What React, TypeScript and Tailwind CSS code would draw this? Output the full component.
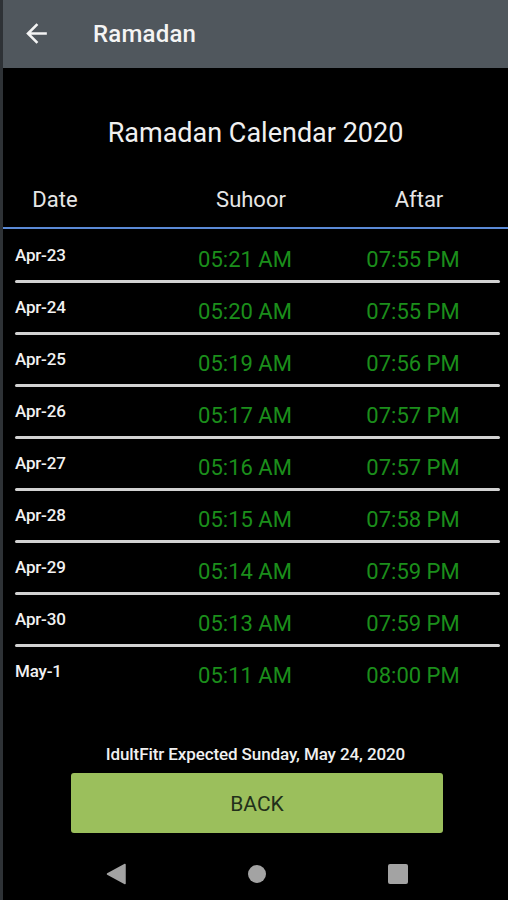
import React from "react";

const rows: [string, string, string][] = [
  ["Apr-23", "05:21 AM", "07:55 PM"],
  ["Apr-24", "05:20 AM", "07:55 PM"],
  ["Apr-25", "05:19 AM", "07:56 PM"],
  ["Apr-26", "05:17 AM", "07:57 PM"],
  ["Apr-27", "05:16 AM", "07:57 PM"],
  ["Apr-28", "05:15 AM", "07:58 PM"],
  ["Apr-29", "05:14 AM", "07:59 PM"],
  ["Apr-30", "05:13 AM", "07:59 PM"],
  ["May-1", "05:11 AM", "08:00 PM"],
];

export default function App() {
  return (
    <div
      className="flex w-[508px] h-[900px] bg-black overflow-hidden"
      style={{ fontFamily: "Roboto, 'Noto Sans', sans-serif" }}
    >
      <div className="w-[3px] h-full bg-[#2e3236] shrink-0" />
      <div className="flex flex-col flex-1">
        {/* App bar */}
        <div className="h-[68px] bg-[#50575d] flex items-center shrink-0">
          <svg
            width="31"
            height="31"
            viewBox="0 0 24 24"
            className="ml-[18px] mt-[-2px]"
            fill="#f4f4f4"
          >
            <path d="M20 11H7.83l5.59-5.59L12 4l-8 8 8 8 1.41-1.41L7.83 13H20v-2z" />
          </svg>
          <span className="ml-[41px] text-[24px] leading-[28px] font-medium text-[#f4f4f4] tracking-[0.2px]">
            Ramadan
          </span>
        </div>

        {/* Title */}
        <div className="mt-[49px] text-center text-[27px] leading-[32px] text-[#f0f0f0]">
          Ramadan Calendar 2020
        </div>

        {/* Column headers */}
        <div className="mt-[38px] flex text-[22px] leading-[26px] text-[#e6e6e6]">
          <div className="w-[104px] text-center">Date</div>
          <div className="ml-[64px] w-[160px] text-center">Suhoor</div>
          <div className="w-[176px] text-center">Aftar</div>
        </div>

        <div className="mt-[14px] h-[2px] bg-[#5b8ad6]" />

        {/* Rows */}
        <div className="pt-[2px] flex flex-col">
          {rows.map(([d, s, a], i) => (
            <div key={d} className="flex flex-col">
              <div className="h-[49px] pl-[12px] grid grid-cols-[150px_160px_176px] items-start">
                <div className="pt-[15px] text-[17px] leading-[18px] font-medium text-[#f2f2f2] tracking-[-0.2px]">
                  {d}
                </div>
                <div className="pt-[16px] text-center text-[22px] leading-[26px] text-[#1b8e1b]">
                  {s}
                </div>
                <div className="pt-[16px] text-center text-[22px] leading-[26px] text-[#1b8e1b]">
                  {a}
                </div>
              </div>
              {i < rows.length - 1 && (
                <div className="ml-[12px] w-[485px] h-[3px] bg-[#d2d2d2] rounded-full" />
              )}
            </div>
          ))}
        </div>

        {/* Footer text */}
        <div className="mt-[49px] text-center text-[17px] leading-[18px] font-medium text-[#f0f0f0] tracking-[-0.1px]">
          IdultFitr Expected Sunday, May 24, 2020
        </div>

        {/* Back button */}
        <div className="mt-[10px] ml-[68px] w-[372px] h-[60px] rounded-[3px] bg-[#9bbf5c] flex items-center justify-center pt-[3px] text-[21px] text-[#22301a]">
          BACK
        </div>

        {/* Nav bar */}
        <div className="mt-[15px] h-[52px] flex items-center">
          <svg width="20" height="22" viewBox="0 0 20 22" className="ml-[103px]">
            <path d="M19 1.5 L19 20.5 L1.5 11 Z" fill="#a3a3a3" stroke="#a3a3a3" strokeWidth="1.5" strokeLinejoin="round" />
          </svg>
          <div className="ml-[122px] w-[18px] h-[18px] rounded-full bg-[#a3a3a3]" />
          <div className="ml-[122px] w-[20px] h-[20px] rounded-[2px] bg-[#a3a3a3]" />
        </div>
      </div>
    </div>
  );
}
